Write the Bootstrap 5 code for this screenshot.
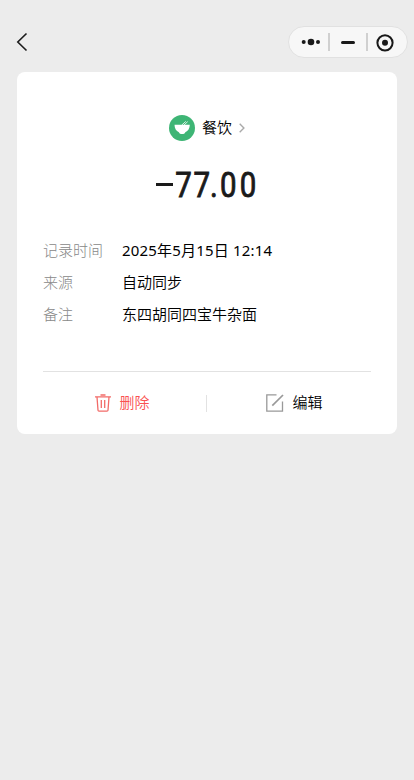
<!DOCTYPE html>
<html lang="zh-CN">
<head>
<meta charset="utf-8">
<meta name="viewport" content="width=device-width, initial-scale=1">
<title>账单详情</title>
<link href="https://cdn.jsdelivr.net/npm/bootstrap@5.3.0/dist/css/bootstrap.min.css" rel="stylesheet">
<style>
body{background:#ececec;color:#000;font:350 15px/22px "Noto Sans","Noto Sans CJK SC",sans-serif;min-height:780px}
svg{display:block;flex:none}
.topbar{height:72px;padding:26px 6px 0 16px}
.back{margin-top:6px}
.capsule{width:120px;height:32px;background:#f7f7f7;border:1px solid #e1e1e1}
.bill{margin:0 17px;height:362px;border:0;border-radius:8px;padding:0 26px}
.category{margin-top:43px;height:26px}
.category-name{margin-left:7px}
.arrow{margin-left:7px}
.lift{padding-bottom:2px}
.amount{font:400 35px/40px Roboto,sans-serif;color:#1a1a1a;margin-top:24px;height:40px}
.sign{width:17px;height:3px;background:#1a1a1a;margin-right:3px;margin-top:-1px}
.digits{width:82px;overflow:visible}
.details{margin-top:34px;row-gap:10px}
.term{width:79px;color:#888;font-family:"Noto Sans CJK SC",sans-serif;font-weight:300}
.when{letter-spacing:.18px;font-weight:400}
.actions{margin-top:46px;height:63px;border-top:1px solid #e2e2e2}
.split{width:1px;height:17px;background:#e2e2e2}
.remove{color:#fa5151;padding-right:4px}
.edit{padding-left:12px}
.half{flex:none;width:163px}
</style>
<script src="https://cdn.jsdelivr.net/npm/bootstrap@5.3.0/dist/js/bootstrap.bundle.min.js"></script>
</head>
<body>
<header class="topbar d-flex justify-content-between align-items-start">
  <svg class="back" width="12" height="20" viewBox="0 0 12 20" fill="none" stroke="#1c1c1c" stroke-width="1.6"><path d="M10.500 1.500 1.800 10l8.700 8.500"/></svg>
  <div class="capsule rounded-pill">
    <svg width="118" height="30" viewBox="0 0 118 30">
      <g fill="#191919"><circle cx="14.700" cy="15" r="2"/><circle cx="22" cy="15" r="3.300"/><circle cx="29" cy="15" r="2"/><rect x="52" y="14" width="14" height="3" rx="1.500"/><circle cx="96" cy="15.800" r="3"/></g>
      <path d="M40 6v18M78 6v18" stroke="#d0d0d0" stroke-width="2"/>
      <circle cx="96" cy="15.800" r="7.600" fill="none" stroke="#191919" stroke-width="2"/>
    </svg>
  </div>
</header>
<main class="card bill">
  <div class="category d-flex justify-content-center align-items-center">
    <svg width="26" height="26" viewBox="0 0 26 26"><circle cx="13" cy="13" r="13" fill="#3eb575"/><path d="M5.500 9.700h15.300c-.1 3.700-1.700 6.200-4.500 7.600-.5 1.100-1.100 1.700-2 1.700h-2.400c-.9 0-1.500-.6-2-1.700-2.800-1.400-4.300-3.900-4.400-7.600z" fill="#fff"/><path d="m12.800 10 4-3.600M15 10l3.700-3.400" stroke="#fff" stroke-width=".8"/></svg>
    <span class="category-name lift">餐饮</span>
    <svg class="arrow" width="6" height="10" viewBox="0 0 6 10" fill="none" stroke="#aaa" stroke-width="1.400"><path d="m.7.7 4.200 4.300L.7 9.300"/></svg>
  </div>
  <div class="amount d-flex justify-content-center align-items-center">
    <span class="sign"></span>
    <svg class="digits" height="40" fill="#1a1a1a" stroke="#1a1a1a" stroke-width=".9"><text transform="scale(.84 1)" x="-.9 20.700 40.600 52.500 76" y="32">77.00</text></svg>
  </div>
  <div class="details d-flex flex-column">
    <div class="d-flex"><span class="term">记录时间</span><span class="when">2025年5月15日 12:14</span></div>
    <div class="d-flex"><span class="term">来源</span><span>自动同步</span></div>
    <div class="d-flex"><span class="term">备注</span><span>东四胡同四宝牛杂面</span></div>
  </div>
  <div class="actions d-flex align-items-center">
    <div class="remove half d-flex justify-content-center align-items-center">
      <svg width="16" height="18" viewBox="0 0 16 18" fill="none" stroke="#f26b68" stroke-width="1.300"><path d="M0 2.800h16M5.500 1h5M2 3l1 13.200q.1.900 1 .9h8q.9 0 1-.9L14 3M6.300 6v8M9.700 6v8"/></svg>
      <span class="ms-2 lift">删除</span>
    </div>
    <span class="split"></span>
    <div class="edit half d-flex justify-content-center align-items-center">
      <svg width="18" height="18" viewBox="0 0 18 18" fill="none" stroke="#999" stroke-width="1.300"><path d="M10.500.9H.8v16.200h15.700V7.500"/><path d="M6.300 11.700 17 1" stroke-width="1.700"/></svg>
      <span class="ms-2 lift">编辑</span>
    </div>
  </div>
</main>
</body>
</html>
